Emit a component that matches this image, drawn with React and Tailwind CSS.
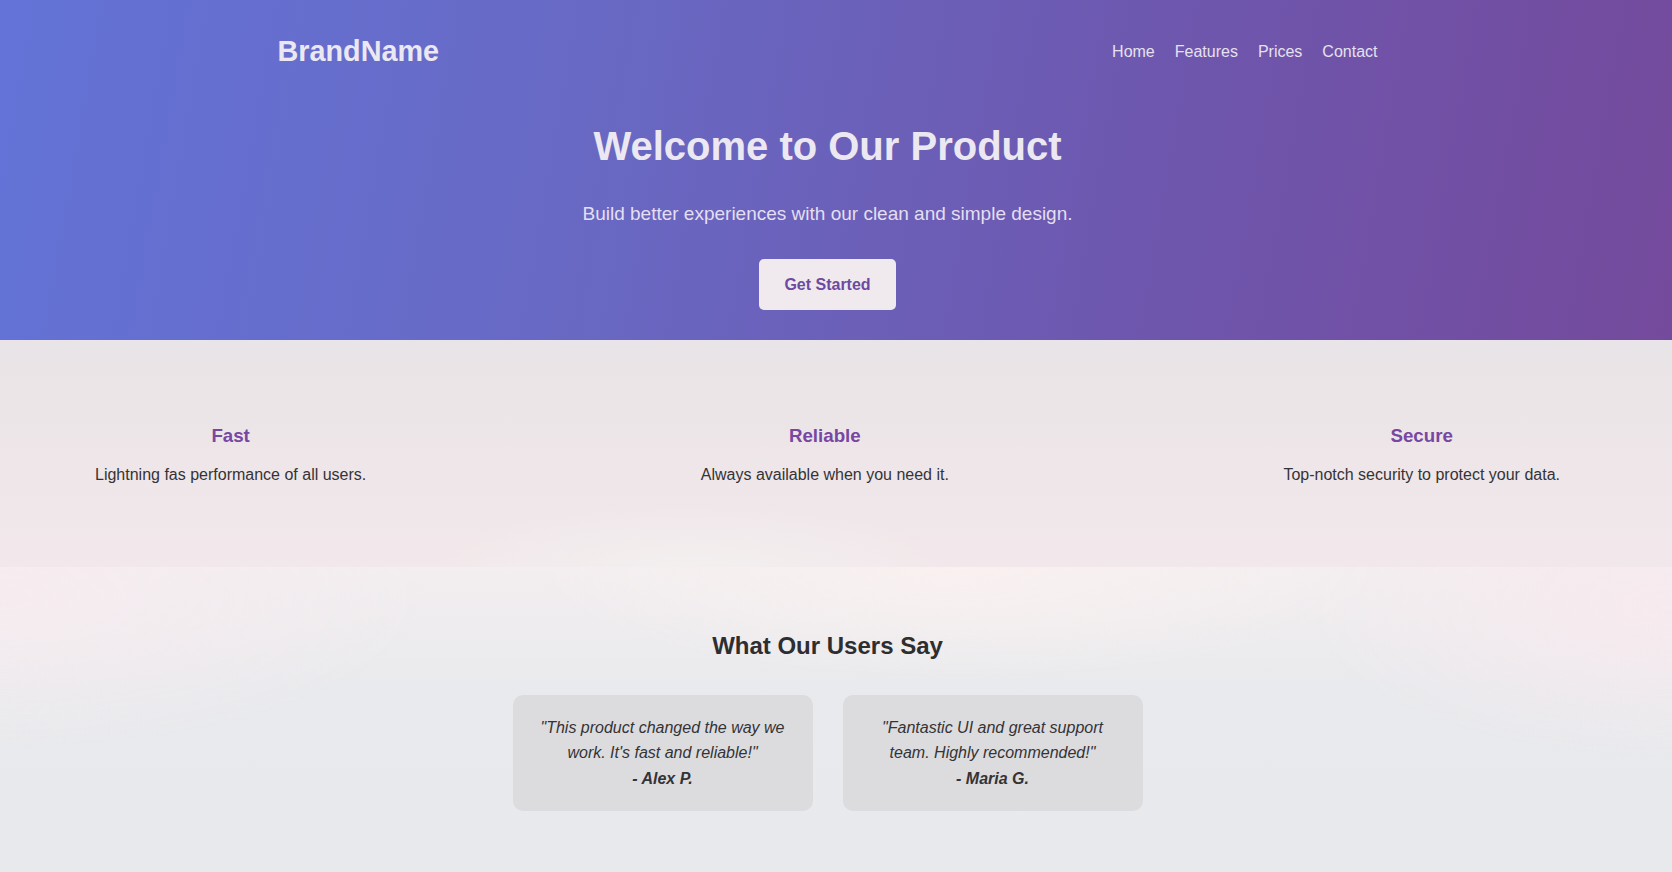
const features = [
  { title: "Fast", text: "Lightning fas performance of all users." },
  { title: "Reliable", text: "Always available when you need it." },
  { title: "Secure", text: "Top-notch security to protect your data." },
];

const reviews = [
  { quote: "\"This product changed the way we work. It's fast and reliable!\"", name: "- Alex P." },
  { quote: "\"Fantastic UI and great support team. Highly recommended!\"", name: "- Maria G." },
];

function Hero() {
  return (
    <section className="bg-[image:linear-gradient(100deg,#6373d7_0%,#6869c4_35%,#6e56ad_70%,#744a9c_100%)] pr-[17px] text-[#ece8f1]">
      <header className="mx-auto flex w-[1100px] items-center justify-between pt-[35px]">
        <div className="text-[28.8px] font-bold leading-[33px]">BrandName</div>
        <nav className="mt-[2px] flex gap-5 text-base leading-[18.4px] text-[#e6e1ee]">
          <a href="#">Home</a>
          <a href="#">Features</a>
          <a href="#">Prices</a>
          <a href="#">Contact</a>
        </nav>
      </header>
      <div className="flex flex-col items-center pb-[30px] text-center">
        <h1 className="mt-[55px] text-[40px] font-bold leading-[46px]">Welcome to Our Product</h1>
        <p className="mt-[34px] text-[19px] leading-[22px] text-[#e4dff0]">
          Build better experiences with our clean and simple design.
        </p>
        <button className="mt-[34px] h-[51px] rounded-[5px] bg-[#f0eaef] px-[25.6px] text-base font-bold text-[#6d4a9f]">
          Get Started
        </button>
      </div>
    </section>
  );
}

function Features() {
  return (
    <section className="bg-[image:radial-gradient(ellipse_260px_60px_at_690px_226px,#f3efef,transparent),linear-gradient(180deg,#e9e4e7_0%,#eee6e9_55%,#f2e8eb_100%)] pr-[17px]">
      <div className="flex justify-between px-[95px] pt-[85px] pb-[83px] text-center">
        {features.map((f) => (
          <div key={f.title}>
            <h3 className="text-[18.72px] font-bold leading-[22px] text-[#7747a1]">{f.title}</h3>
            <p className="mt-[18.5px] text-base leading-[18.4px] text-[#353335]">{f.text}</p>
          </div>
        ))}
      </div>
    </section>
  );
}

function Testimonials() {
  return (
    <section className="bg-[#e8e9ec] bg-[image:radial-gradient(ellipse_420px_110px_at_960px_0px,#f9f1f0,transparent),radial-gradient(ellipse_420px_150px_at_0px_30px,#f6ecf0,transparent),radial-gradient(ellipse_360px_150px_at_1672px_40px,#f7eaef,transparent),linear-gradient(180deg,#f3eef0_0px,#e9eaed_120px,#e8e9ec_100%)] pr-[17px] pb-[61px]">
      <h2 className="pt-[65px] text-center text-2xl font-bold leading-[27.6px] text-[#2e2d2f]">
        What Our Users Say
      </h2>
      <div className="mt-[35px] flex justify-center gap-[30px]">
        {reviews.map((r) => (
          <div key={r.name} className="w-[300px] rounded-[10px] bg-[#dcdcdf] p-5 text-center text-base leading-[25.6px] text-[#343336]">
            <p className="italic">{r.quote}</p>
            <p className="font-bold italic">{r.name}</p>
          </div>
        ))}
      </div>
    </section>
  );
}

export default function App() {
  return (
    <div className="min-h-screen bg-[#e8e9ec] font-['Liberation_Sans',Arial,sans-serif]">
      <Hero />
      <Features />
      <Testimonials />
    </div>
  );
}
